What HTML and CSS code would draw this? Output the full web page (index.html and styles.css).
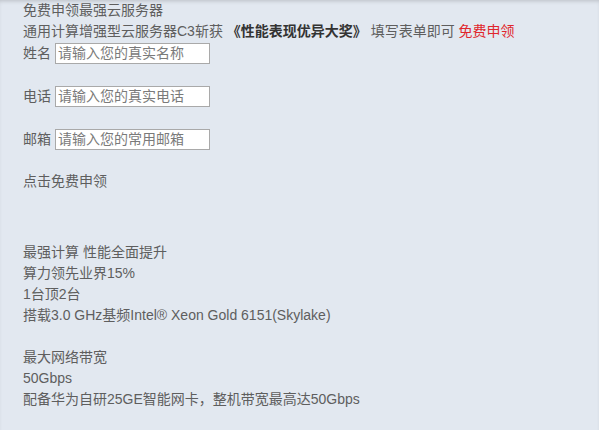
FILE: index.html
```html
<!DOCTYPE html>
<html lang="zh-CN">
<head>
<meta charset="utf-8">
<title>免费申领最强云服务器</title>
<link rel="stylesheet" href="styles.css">
</head>
<body>
<div class="page">
  <div class="intro">
    <p class="line">免费申领最强云服务器</p>
    <p class="line">通用计算增强型云服务器C3斩获 <strong class="award">《性能表现优异大奖》</strong> 填写表单即可 <span class="red">免费申领</span></p>
  </div>
  <form class="form">
    <div class="field"><label class="label">姓名</label> <input class="input" type="text" placeholder="请输入您的真实名称"></div>
    <div class="field"><label class="label">电话</label> <input class="input" type="text" placeholder="请输入您的真实电话"></div>
    <div class="field"><label class="label">邮箱</label> <input class="input" type="text" placeholder="请输入您的常用邮箱"></div>
    <p class="line submit">点击免费申领</p>
  </form>
  <div class="block">
    <p class="line">最强计算 性能全面提升</p>
    <p class="line">算力领先业界15%</p>
    <p class="line">1台顶2台</p>
    <p class="line">搭载3.0 GHz基频Intel® Xeon Gold 6151(Skylake)</p>
  </div>
  <div class="block">
    <p class="line">最大网络带宽</p>
    <p class="line">50Gbps</p>
    <p class="line">配备华为自研25GE智能网卡，整机带宽最高达50Gbps</p>
  </div>
</div>
</body>
</html>
```
FILE: styles.css
```css
html, body {
  margin: 0;
  padding: 0;
  height: 100%;
}
body {
  background: #e2e8f0;
  box-shadow: inset 0 3px 4px -2px rgba(0, 0, 0, 0.18);
  font-family: "Liberation Sans", "Noto Sans CJK SC", sans-serif;
  font-size: 14px;
  color: #5e5e5e;
  overflow: hidden;
}
.page {
  padding: 0 23px;
}
.line {
  margin: 0;
  height: 21px;
  line-height: 21px;
  white-space: nowrap;
}
.award {
  color: #333;
  font-weight: bold;
}
.red {
  color: #e0262c;
}
.form {
  margin: 0;
}
.field {
  display: flex;
  align-items: center;
  gap: 4px;
  height: 22px;
  margin-bottom: 21px;
}
.label {
  line-height: 21px;
}
.input {
  box-sizing: border-box;
  width: 155px;
  height: 21px;
  margin: 0;
  padding: 0 2px;
  border: 1px solid #a9a9a9;
  background: #fff;
  font-family: "Liberation Sans", "Noto Sans CJK SC", sans-serif;
  font-size: 14px;
  color: #333;
}
.input::placeholder {
  color: #7a7a7a;
}
.submit {
  margin-bottom: 50px;
}
.block + .block {
  margin-top: 21px;
}
```
